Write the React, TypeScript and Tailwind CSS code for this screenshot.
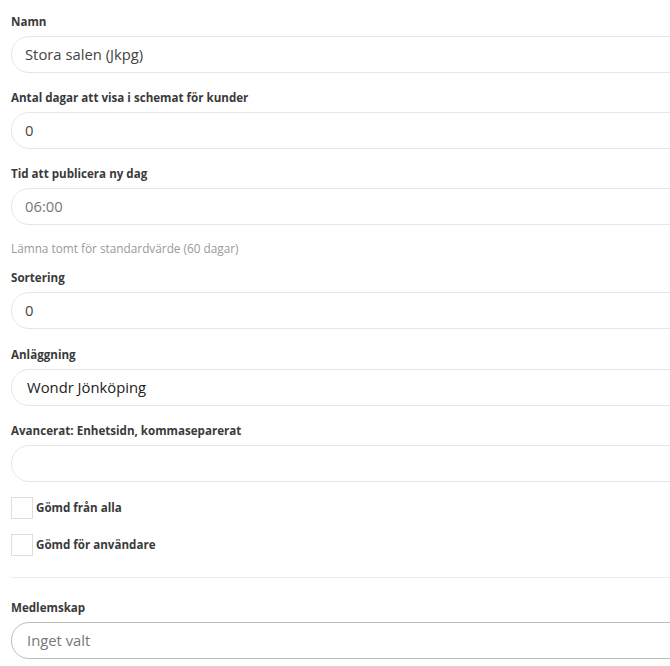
import React from 'react'

const font = { fontFamily: '"Open Sans", Lato, sans-serif' }

interface FieldProps {
  label: string
  value?: string
  muted?: boolean
  select?: boolean
  dark?: boolean
}

function Field({ label, value, muted, select, dark }: FieldProps) {
  return (
    <div className="flex flex-col">
      <label className="text-[11.6px] leading-[15px] font-bold text-[#3a3a3a] mb-[7px]">{label}</label>
      <div
        className={
          'h-[37px] w-[720px] rounded-[18px] border flex items-center bg-white ' +
          (dark ? 'border-[#bdbdbd] ' : 'border-[#e6e6e6] ') +
          (select ? 'pl-[15px]' : 'pl-[13px]')
        }
      >
        <span
          className={
            'text-[14.8px] ' +
            (muted ? 'text-[#777777]' : select ? 'text-[#222222]' : 'text-[#444444]')
          }
        >
          {value}
        </span>
      </div>
    </div>
  )
}

function Check({ label }: { label: string }) {
  return (
    <label className="flex items-center gap-[3px] h-[22px]">
      <span className="w-[22px] h-[22px] border border-[#dedede] bg-white" />
      <span className="text-[11.6px] font-bold text-[#3a3a3a]">{label}</span>
    </label>
  )
}

export default function App() {
  return (
    <div className="w-[670px] h-[666px] overflow-hidden bg-white" style={font}>
      <div className="pl-[11px] pt-[14px] flex flex-col">
        <Field label="Namn" value="Stora salen (Jkpg)" />
        <div className="h-[17px]" />
        <Field label="Antal dagar att visa i schemat för kunder" value="0" />
        <div className="h-[17px]" />
        <Field label="Tid att publicera ny dag" value="06:00" muted />
        <p className="text-[11.8px] leading-[15px] text-[#9a9a9a] mt-[16px]">Lämna tomt för standardvärde (60 dagar)</p>
        <div className="h-[14px]" />
        <Field label="Sortering" value="0" />
        <div className="h-[18px]" />
        <Field label="Anläggning" value="Wondr Jönköping" select />
        <div className="h-[17px]" />
        <Field label="Avancerat: Enhetsidn, kommaseparerat" value="" />
        <div className="h-[15px]" />
        <div className="flex flex-col gap-[15px]">
          <Check label="Gömd från alla" />
          <Check label="Gömd för användare" />
        </div>
        <div className="h-px bg-[#ececec] w-[720px] mt-[21px]" />
        <div className="h-[22px]" />
        <Field label="Medlemskap" value="Inget valt" dark muted select />
      </div>
    </div>
  )
}
